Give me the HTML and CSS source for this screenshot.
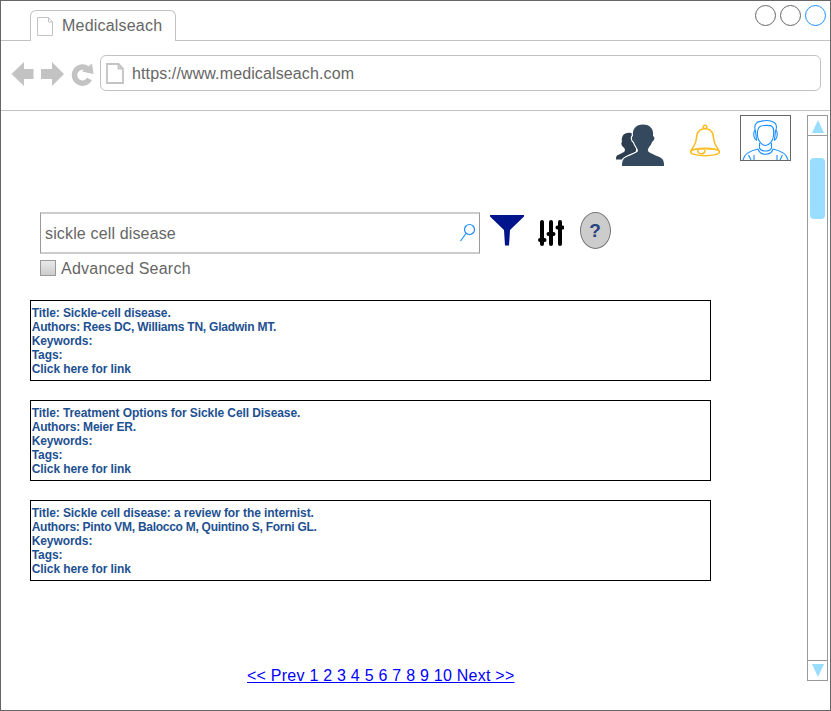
FILE: index.html
```
<!DOCTYPE html>
<html lang="en">
<head>
<meta charset="utf-8">
<title>Medicalseach</title>
<link rel="stylesheet" href="styles.css">
</head>
<body>
<div class="window">
  <header class="tabs">
    <div class="tab">
      <svg class="tab-page" width="17" height="20" viewBox="0 0 17 20"><path d="M.5 .5H11.500L15.500 5V18.500H.5ZM11.500 .5V5H15.500"/></svg>
      <span class="tab-title">Medicalseach</span>
    </div>
    <div class="controls"><i></i><i></i><i class="active"></i></div>
  </header>
  <div class="toolbar">
    <svg class="nav" width="84" height="26" viewBox="0 0 84 26">
      <path d="M.5 13L13 1V8H22.500V18H13V25Z"/>
      <path d="M53 13L41 1V8H30V18H41V25Z"/>
      <path class="reload" d="M78.500 18A8 8 0 1 1 76 7.500"/>
      <path d="M81 2.500L82.500 13L71 10.500Z"/>
    </svg>
    <div class="address">
      <svg class="page" width="18" height="21" viewBox="0 0 18 21"><path d="M1 1H12.500L17 5.500V20H1ZM12.500 1V5.500H17"/></svg>
      <span class="url">https://www.medicalseach.com</span>
    </div>
  </div>
  <div class="body">
    <main>
      <nav class="account">
        <svg class="users" width="50" height="44" viewBox="0 0 50 44">
          <path class="rear" d="M15 9C8 8 5 12 6 18C4.500 19 6 23 8 23.500C9.500 26 9 27 8 28L1 31.500C0 32 0 35 0 35.500H8C10 32 16 30 20 28V10Z"/>
          <path class="front" d="M27 .5C20 .5 16 5 17 12C15 13 16 17 18 18C19 22 22 24 22 27C21 30 9 32 7 36C6 38 6 42 6 42H48C48 40 48 38 47 36C45 32 33 30 32 27C31 24 35 22 36 18C39 16 39 13 37 12C38 5 34 .5 27 .5Z"/>
        </svg>
        <svg class="bell" width="32" height="34" viewBox="0 0 32 34"><circle cx="16" cy="3" r="1.800"/><path d="M13.500 5C9 6 7.500 10 7.300 15C7 20 4 23 1.700 27C2 24 30 24 30 27C28 23 25 20 24.700 15C24.500 10 23 6 18.500 5C17 4.500 15 4.500 13.500 5Z"/><ellipse cx="16" cy="28" rx="14.500" ry="3.700"/><path d="M8.500 26C9 31 16 31 16 26"/></svg>
        <div class="avatar">
          <svg width="49" height="44" viewBox="0 0 49 44"><path d="M14.500 15C12 8 17 5 20 5.500C23 4 30 4 32 6C36 7 36 12 34.500 15M16.500 20C16 14 17 12 19 10.500C21 9 30 9 31 10.500C33 12 33 14 32.500 20C32 25 28 29.500 24.500 29.500C21 29.500 17 25 16.500 20M14.500 14C12 15 12 23 16 24.500M34.500 14C37 15 37 23 33 24.500M14.500 15L15.500 24M34.500 15L33.500 24M18.500 27V32C20 36 29 36 30.500 32V27M17 33C19 40 30 40 32 33M17 33C8 35 3 38 2 44M32 33C41 35 46 38 47 44M7.500 39L10 44M13 39V44M41.500 39L39 44M36 39V44"/></svg>
        </div>
      </nav>
      <section class="search">
        <div class="field"><span>sickle cell disease</span>
          <svg width="17" height="20" viewBox="0 0 17 20"><circle cx="10.500" cy="6.500" r="5"/><path d="M7 10.500L1.500 18"/></svg>
        </div>
        <svg class="filter" width="34" height="31" viewBox="0 0 34 31"><path d="M0 0H34V1.500L20 15L19 30.500H15L14 15L0 1.500Z"/></svg>
        <svg class="sliders" width="26" height="26" viewBox="0 0 26 26"><path d="M4 2V24M13 2V24M22 2V24"/><path d="M2 20H6.500M10.500 14H15.500M19.500 7.500H24.500"/></svg>
        <div class="help">?</div>
      </section>
      <label class="advanced"><span class="box"></span><span>Advanced Search</span></label>
      <section class="results">
        <article><p>Title: Sickle-cell disease.</p><p class="authors">Authors: Rees DC, Williams TN, Gladwin MT.</p><p>Keywords:</p><p>Tags:</p><p>Click here for link</p></article>
        <article><p>Title: Treatment Options for Sickle Cell Disease.</p><p class="authors">Authors: Meier ER.</p><p>Keywords:</p><p>Tags:</p><p>Click here for link</p></article>
        <article><p>Title: Sickle cell disease: a review for the internist.</p><p class="authors long">Authors: Pinto VM, Balocco M, Quintino S, Forni GL.</p><p>Keywords:</p><p>Tags:</p><p>Click here for link</p></article>
      </section>
      <a class="pager" href="#">&lt;&lt; Prev 1 2 3 4 5 6 7 8 9 10 Next &gt;&gt;</a>
    </main>
    <aside class="scrollbar">
      <div class="up"><svg width="12" height="13" viewBox="0 0 12 13"><path d="M6 0L12 13H0Z"/></svg></div>
      <div class="track"><div class="thumb"></div></div>
      <div class="down"><svg width="12" height="13" viewBox="0 0 12 13"><path d="M0 0H12L6 13Z"/></svg></div>
    </aside>
  </div>
</div>
</body>
</html>
```
FILE: styles.css
```
* { box-sizing: border-box; }
body { margin: 0; background: #fff; font: 16px/20px "Liberation Sans", Arial, sans-serif; color: #666; }
p { margin: 0; }
svg { display: block; flex: none; fill: none; }
.window { width: 831px; height: 711px; border: 1px solid #666; display: flex; flex-direction: column; }
.tabs { height: 40px; flex: none; border-bottom: 1px solid #c3c3c3; display: flex; justify-content: space-between; padding: 9px 4px 0 29px; }
.tab { width: 146px; height: 31px; border: 1px solid #c3c3c3; border-bottom: 0; border-radius: 6px 6px 0 0; background: #fff; display: flex; padding: 6px 0 0 6px; }
.tab-page { stroke: #c3c3c3; }
.tab-title { margin: -1px 0 0 8px; letter-spacing: .2px; }
.controls { display: flex; gap: 4px; margin-top: -5px; }
.controls i { width: 21px; height: 21px; border: 1px solid #666; border-radius: 50%; }
.controls .active { border-color: #1e90ff; }
.toolbar { height: 70px; flex: none; border-bottom: 1px solid #c3c3c3; display: flex; padding: 14px 9px 0 10px; }
.nav { fill: #c3c3c3; margin: 6px 5px 0 0; }
.nav .reload { fill: none; stroke: #c3c3c3; stroke-width: 5.5; }
.address { flex: 1; height: 36px; border: 1px solid #c3c3c3; border-radius: 6px; display: flex; padding: 7px 0 0 5px; }
.page { stroke: #c3c3c3; stroke-width: 1.8; }
.url { margin: 1px 0 0 8px; letter-spacing: .12px; }
.body { flex: 1; display: flex; justify-content: space-between; padding: 4px 2px 29px 29px; }
main { width: 761px; }
.account { height: 98px; display: flex; justify-content: flex-end; align-items: flex-start; }
.users { fill: #34495e; margin: 9px 23px 0 0; }
.users .rear { fill: #2c3e50; }
.users .front { stroke: #fff; stroke-width: 2.4; paint-order: stroke; }
.bell { stroke: #fdbc22; stroke-width: 1.5; margin: 9px 19px 0 0; }
.avatar { width: 51px; height: 46px; border: 1px solid #666; }
.avatar svg { stroke: #1e90ff; stroke-width: 1.1; }
.search { display: flex; height: 42px; margin: -1px 0 0 10px; }
.field { width: 440px; height: 42px; border: 1px solid #999; border-width: 2px 1px; border-top-color: #ccc; border-bottom-color: #ccc; display: flex; justify-content: space-between; padding: 9px 3px 0 4px; }
.field span { padding-top: 1px; letter-spacing: .15px; }
.field svg { stroke: #1e90ff; stroke-width: 1.2; }
.filter { fill: #00148c; margin: 3px 0 0 10px; }
.sliders { margin: 8px 0 0 14px; stroke: #000; stroke-width: 4; stroke-linecap: round; }
.help { width: 31px; height: 37px; margin-left: 16px; border: 1px solid #777; border-radius: 50%; background: #ccc; color: #28427f; font-weight: bold; font-size: 19px; line-height: 36px; text-align: center; padding-right: 1px; }
.advanced { display: flex; height: 20px; margin: 4px 0 0 10px; letter-spacing: .23px; }
.advanced span:last-child { padding-top: 1px; }
.box { width: 16px; height: 16px; margin: 2px 5px 0 0; border: 1px solid #999; background: linear-gradient(#eaeaea, #ccc); }
.results { width: 681px; margin-top: 22px; display: grid; gap: 19px; }
article { height: 81px; border: 1px solid #000; padding: 5px 0 0 .7px; color: #1d5091; font-size: 12px; line-height: 14px; font-weight: bold; letter-spacing: -.08px; }
.authors { letter-spacing: -.21px; }
.authors.long { letter-spacing: -.27px; }
.pager { display: block; width: max-content; margin: 85px 0 0 217px; color: #00f; letter-spacing: .24px; }
.scrollbar { width: 21px; height: 566px; border: 1px solid #999; display: flex; flex-direction: column; }
.up { height: 20px; border-bottom: 1px solid #999; padding: 4px 0 0 4px; }
.down { height: 20px; border-top: 1px solid #999; padding: 3px 0 0 4px; }
.scrollbar svg { fill: #9df; }
.track { flex: 1; padding: 22px 2px 0; }
.thumb { height: 61px; border-radius: 4px; background: #9df; }
```
